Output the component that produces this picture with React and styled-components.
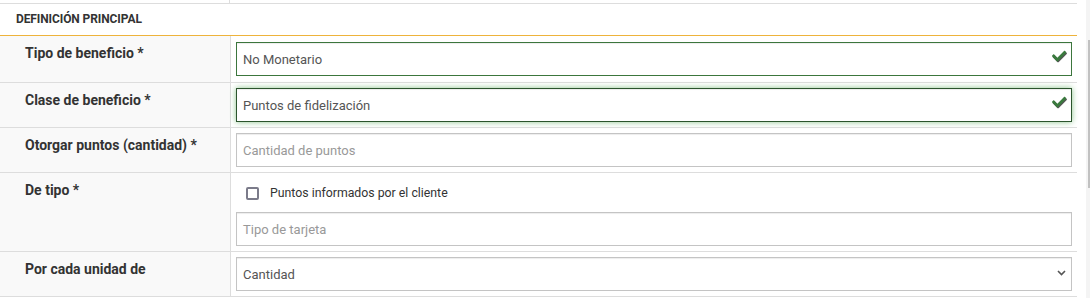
import React from 'react';
import styled, { createGlobalStyle } from 'styled-components';

const GlobalStyle = createGlobalStyle`
  body {
    margin: 0;
    background: #fff;
    font-family: Roboto, "Liberation Sans", Arial, sans-serif;
    color: #333;
  }
`;

const Page = styled.div`
  display: flex;
  width: 1090px;
  height: 298px;
  overflow: hidden;
`;

const Main = styled.div`
  width: 1077px;
  flex-shrink: 0;
`;

const Gutter = styled.div`
  flex: 1;
`;

const ScrollTrack = styled.div`
  width: 4px;
  background: #f4f4f4;
  padding-top: 40px;
  display: flex;
  justify-content: flex-end;
  align-items: flex-start;
`;

const ScrollThumb = styled.div`
  width: 2px;
  height: 148px;
  background: #c1c1c1;
`;

const TopStub = styled.div`
  display: grid;
  grid-template-columns: 230px 1fr;
  height: 3px;
  border-bottom: 1px solid #ddd;
`;

const StubCell = styled.div`
  border-right: ${p => (p.$divider ? '1px solid #ddd' : 'none')};
`;

const SectionHeader = styled.div`
  height: 32px;
  padding-left: 16px;
  padding-bottom: 1px;
  display: flex;
  align-items: center;
  font-size: 12px;
  font-weight: 700;
  color: #333;
  letter-spacing: -0.1px;
  border-bottom: 1px solid #eeb33b;
  box-sizing: border-box;
`;

const Row = styled.div`
  display: grid;
  grid-template-columns: 231px 1fr;
  border-bottom: 1px solid #ddd;
`;

const Label = styled.div`
  background: #f9f9f9;
  border-right: 1px solid #ddd;
  padding: 8px 25px;
  font-size: 14px;
  font-weight: 700;
  line-height: 18px;
  color: #333;
`;

const Field = styled.div`
  padding: ${p => (p.$first ? '6px 5px' : '5px')};
  display: flex;
  flex-direction: column;
  gap: 4px;
`;

const InputWrap = styled.div`
  position: relative;
`;

const Input = styled.div`
  height: 34px;
  box-sizing: border-box;
  padding: 0 6px;
  display: flex;
  align-items: center;
  font-size: 13px;
  color: ${p => (p.$placeholder ? '#999' : '#555')};
  background: #fff;
  border: 1px solid ${p => (p.$state === 'ok' ? '#3c763d' : p.$state === 'focus' ? '#2b542c' : '#c4c4c4')};
  box-shadow: inset 0 1px 1px rgba(0, 0, 0, 0.075)
    ${p => (p.$state === 'focus' ? ', 0 0 6px #8bc48c' : '')};
`;

const CheckIcon = styled.svg`
  position: absolute;
  right: 5px;
  top: 7px;
  width: 15px;
  height: 15px;
`;

const Chevron = styled.svg`
  position: absolute;
  right: 6px;
  top: 13px;
  width: 9px;
  height: 6px;
`;

const CheckLine = styled.label`
  height: 30px;
  display: flex;
  align-items: center;
  padding-left: 10px;
  gap: 11px;
  font-size: 12.3px;
  color: #333;
`;

const Box = styled.span`
  width: 13px;
  height: 13px;
  box-sizing: border-box;
  border: 2px solid #7b7b8a;
  border-radius: 2px;
  background: #fff;
`;

const checkPath =
  'M173.9 439.4l-166.4-166.4c-10-10-10-26.2 0-36.2l36.2-36.2c10-10 26.2-10 36.2 0L192 312.7 432.1 72.6c10-10 26.2-10 36.2 0l36.2 36.2c10 10 10 26.2 0 36.2l-294.4 294.4c-10 10-26.2 10-36.2 0z';

const OkMark = () => (
  <CheckIcon viewBox="0 0 540 540">
    <path d={checkPath} fill="#555" transform="translate(26 34)" />
    <path d={checkPath} fill="#3a7a3e" />
  </CheckIcon>
);

const rows = [
  { label: 'Tipo de beneficio *', value: 'No Monetario', state: 'ok' },
  { label: 'Clase de beneficio *', value: 'Puntos de fidelización', state: 'focus' },
  { label: 'Otorgar puntos (cantidad) *', value: 'Cantidad de puntos', placeholder: true },
];

export default function App() {
  return (
    <Page>
      <GlobalStyle />
      <Main>
        <TopStub>
          <StubCell $divider />
          <StubCell />
        </TopStub>
        <SectionHeader>DEFINICIÓN PRINCIPAL</SectionHeader>

        {rows.map((r, i) => (
          <Row key={r.label}>
            <Label>{r.label}</Label>
            <Field $first={i === 0}>
              <InputWrap>
                <Input $state={r.state} $placeholder={r.placeholder}>
                  {r.value}
                </Input>
                {r.state && <OkMark />}
              </InputWrap>
            </Field>
          </Row>
        ))}

        <Row>
          <Label>De tipo *</Label>
          <Field>
            <CheckLine>
              <Box />
              Puntos informados por el cliente
            </CheckLine>
            <InputWrap>
              <Input $placeholder>Tipo de tarjeta</Input>
            </InputWrap>
          </Field>
        </Row>

        <Row>
          <Label>Por cada unidad de</Label>
          <Field>
            <InputWrap>
              <Input>Cantidad</Input>
              <Chevron viewBox="0 0 9 6">
                <polyline points="1,1 4.5,4.5 8,1" fill="none" stroke="#555" strokeWidth="1.6" />
              </Chevron>
            </InputWrap>
          </Field>
        </Row>
      </Main>
      <Gutter />
      <ScrollTrack>
        <ScrollThumb />
      </ScrollTrack>
    </Page>
  );
}
